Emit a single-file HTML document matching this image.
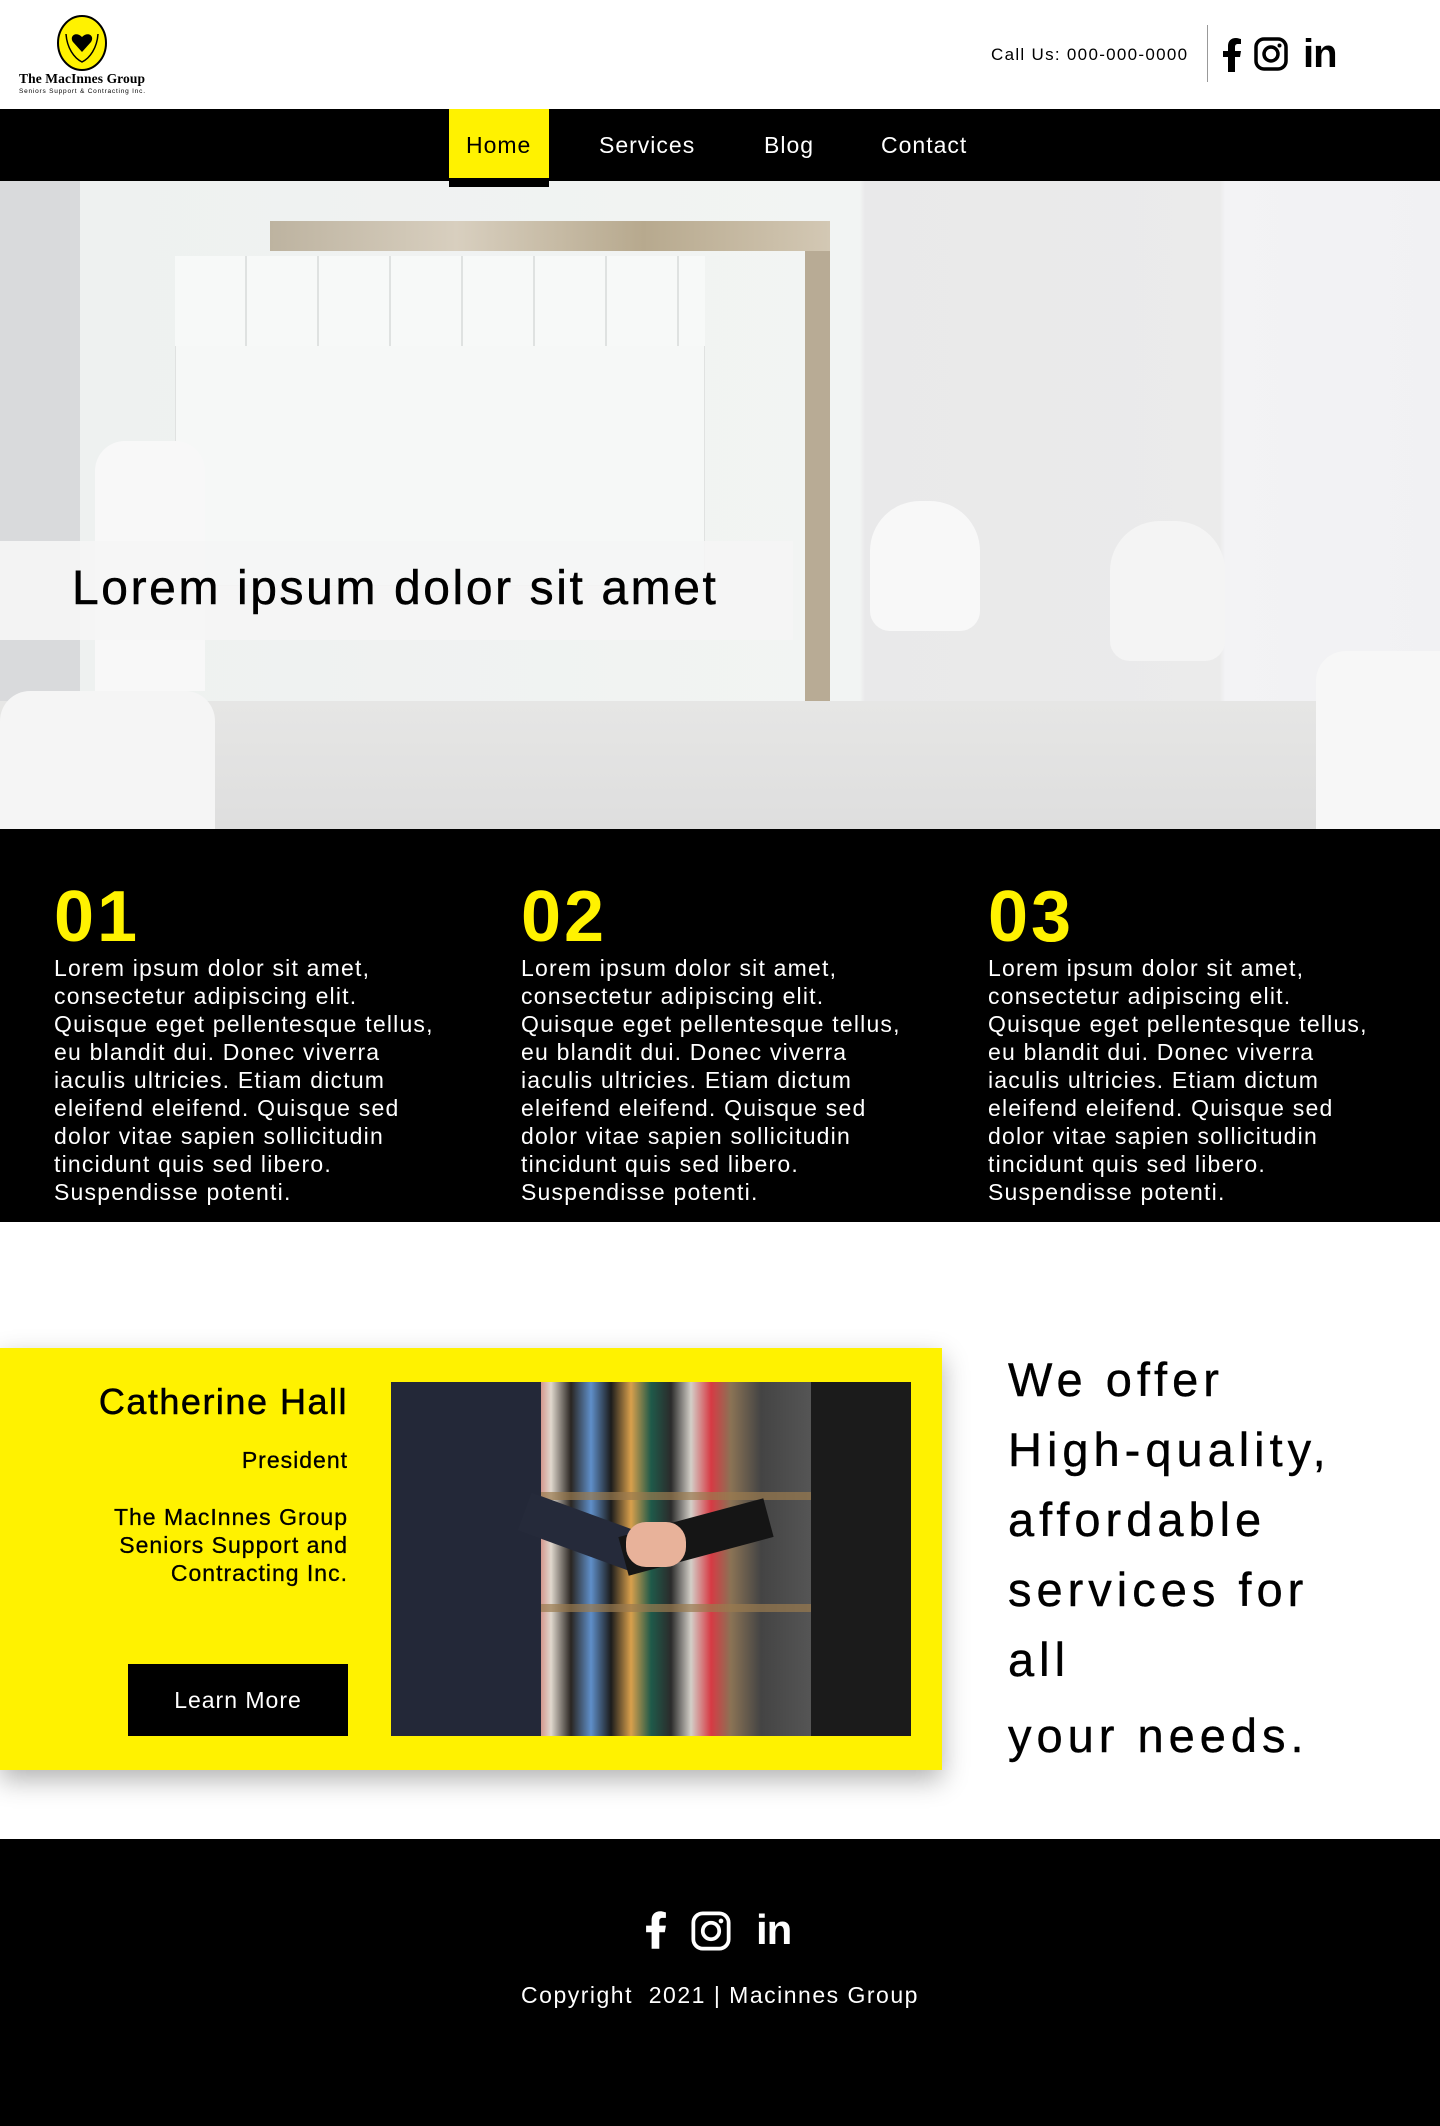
<!DOCTYPE html>
<html><head><meta charset="utf-8"><style>
*{margin:0;padding:0;box-sizing:border-box}
body{width:1440px;height:2126px;font-family:"Liberation Sans",Arial,sans-serif;background:#fff;position:relative;overflow:hidden}
.a{position:absolute}
.nav a{position:absolute;top:0;height:72px;line-height:72px;color:#fff;font-size:23px;letter-spacing:1px;text-decoration:none}
.col{position:absolute;top:877px;width:440px;color:#fff}
.col .n{color:#fff200;font-size:72px;font-weight:bold;line-height:80px;letter-spacing:3px}
.col p{font-size:23px;line-height:28px;letter-spacing:1.2px;margin-top:-3px}
.offer{position:absolute;left:1008px;font-size:47px;letter-spacing:5px;color:#000;line-height:56px;-webkit-text-stroke:.4px #000}
</style></head><body>
<!-- header -->
<div class="a" style="left:0;top:0;width:1440px;height:109px;background:#fff"></div>
<svg class="a" style="left:19px;top:14px" width="130" height="84" viewBox="0 0 130 84">
<ellipse cx="63" cy="29" rx="24" ry="27" fill="#fff200" stroke="#000" stroke-width="2"/>
<path d="M63 38 L54 28 C50 22 57 17 63 23 C69 17 76 22 72 28 Z" fill="#000"/>
<path d="M47 20 C48 34 55 44 63 48 C71 44 78 34 79 20" fill="none" stroke="#000" stroke-width="1.5"/>
<text x="0" y="69" font-family="Liberation Serif,serif" font-size="13.5" font-weight="bold" textLength="126">The MacInnes Group</text>
<text x="0" y="79" font-family="Liberation Sans,sans-serif" font-size="6.5" textLength="126">Seniors Support &amp; Contracting Inc.</text>
</svg>
<div class="a" style="left:991px;top:45px;font-size:17px;letter-spacing:1.3px;color:#000">Call Us: 000-000-0000</div>
<div class="a" style="left:1207px;top:25px;width:1px;height:57px;background:#999"></div>
<svg class="a" style="left:1222px;top:38px" width="20" height="34" viewBox="0 0 20 34"><path d="M13 34V19h5l1-6h-6V9c0-2 1-3 3-3h3V1c-1 0-3-1-5-1-5 0-8 3-8 8v5H1v6h5v15z" fill="#000"/></svg>
<svg class="a" style="left:1254px;top:37px" width="34" height="34" viewBox="0 0 34 34"><rect x="2" y="2" width="30" height="30" rx="8" fill="none" stroke="#000" stroke-width="3.5"/><circle cx="17" cy="17" r="7" fill="none" stroke="#000" stroke-width="3.5"/><circle cx="25.5" cy="8.5" r="2" fill="#000"/></svg>
<div class="a" style="left:1303px;top:32px;font-size:40px;font-weight:bold;line-height:44px;letter-spacing:-1px">in</div>
<!-- nav -->
<div class="a nav" style="left:0;top:109px;width:1440px;height:72px;background:#000">
<div class="a" style="left:449px;top:0;width:100px;height:69px;background:#fff200"></div>
<a style="left:466px;color:#000">Home</a>
<a style="left:599px">Services</a>
<a style="left:764px">Blog</a>
<a style="left:881px">Contact</a>
</div>
<div class="a" style="left:449px;top:178px;width:100px;height:9px;background:#000;z-index:3"></div>
<!-- hero -->
<div class="a" style="left:0;top:181px;width:1440px;height:648px;background:linear-gradient(90deg,#d9dadc 0,#d9dadc 80px,#eef1f0 80px,#f2f4f3 860px,#e9e9ea 865px,#ebebeb 1220px,#f3f3f5 1225px,#f1f1f3 1440px);overflow:hidden">
 <div class="a" style="left:175px;top:75px;width:530px;height:330px;background:#f6f8f7;border:1px solid #e0e2e1"></div>
 <div class="a" style="left:175px;top:75px;width:530px;height:90px;background:repeating-linear-gradient(90deg,#f7f9f8 0,#f7f9f8 70px,#dfe2e1 70px,#dfe2e1 72px)"></div>
 <div class="a" style="left:270px;top:40px;width:560px;height:30px;background:linear-gradient(90deg,#bdb3a0,#d8cfbf,#b7a98e,#d3c8b4)"></div>
 <div class="a" style="left:805px;top:70px;width:25px;height:560px;background:#b8ab95"></div>
 <div class="a" style="left:0;top:520px;width:1440px;height:130px;background:linear-gradient(#e6e6e5,#dedede)"></div>
 <div class="a" style="left:0;top:510px;width:215px;height:140px;background:#f5f5f5;border-radius:30px 30px 0 0"></div>
 <div class="a" style="left:1316px;top:470px;width:124px;height:180px;background:#f7f7f7;border-radius:30px 0 0 0"></div>
 <div class="a" style="left:870px;top:320px;width:110px;height:130px;background:#f8f8f8;border-radius:50px 50px 20px 20px"></div>
 <div class="a" style="left:1110px;top:340px;width:115px;height:140px;background:#f4f4f4;border-radius:50px 50px 20px 20px"></div>
 <div class="a" style="left:95px;top:260px;width:110px;height:250px;background:#f8f8f8;border-radius:30px 30px 0 0"></div>
 <div class="a" style="left:0;top:360px;width:793px;height:99px;background:rgba(245,245,245,.9)"></div>
 <div class="a" style="left:72px;top:380px;font-size:48px;letter-spacing:2.6px;color:#000;line-height:56px;-webkit-text-stroke:.5px #000">Lorem ipsum dolor sit amet</div>
</div>
<!-- columns -->
<div class="a" style="left:0;top:829px;width:1440px;height:393px;background:#000"></div>
<div class="col" style="left:54px"><div class="n">01</div><p>Lorem ipsum dolor sit amet,<br>consectetur adipiscing elit.<br>Quisque eget pellentesque tellus,<br>eu blandit dui. Donec viverra<br>iaculis ultricies. Etiam dictum<br>eleifend eleifend. Quisque sed<br>dolor vitae sapien sollicitudin<br>tincidunt quis sed libero.<br>Suspendisse potenti.</p></div>
<div class="col" style="left:521px"><div class="n">02</div><p>Lorem ipsum dolor sit amet,<br>consectetur adipiscing elit.<br>Quisque eget pellentesque tellus,<br>eu blandit dui. Donec viverra<br>iaculis ultricies. Etiam dictum<br>eleifend eleifend. Quisque sed<br>dolor vitae sapien sollicitudin<br>tincidunt quis sed libero.<br>Suspendisse potenti.</p></div>
<div class="col" style="left:988px"><div class="n">03</div><p>Lorem ipsum dolor sit amet,<br>consectetur adipiscing elit.<br>Quisque eget pellentesque tellus,<br>eu blandit dui. Donec viverra<br>iaculis ultricies. Etiam dictum<br>eleifend eleifend. Quisque sed<br>dolor vitae sapien sollicitudin<br>tincidunt quis sed libero.<br>Suspendisse potenti.</p></div>
<!-- card -->
<div class="a" style="left:0;top:1348px;width:942px;height:422px;background:#fff200;box-shadow:0 10px 25px rgba(0,0,0,.3)"></div>
<div class="a" style="left:40px;top:1380px;width:308px;text-align:right;font-size:36px;letter-spacing:1.5px;line-height:44px;-webkit-text-stroke:.5px #000">Catherine Hall</div>
<div class="a" style="left:40px;top:1447px;width:308px;text-align:right;font-size:23px;letter-spacing:1px;-webkit-text-stroke:.3px #000">President</div>
<div class="a" style="left:40px;top:1503px;width:308px;text-align:right;font-size:23px;letter-spacing:1px;line-height:28px;-webkit-text-stroke:.3px #000">The MacInnes Group<br>Seniors Support and<br>Contracting Inc.</div>
<div class="a" style="left:128px;top:1664px;width:220px;height:72px;background:#000;color:#fff;font-size:23px;letter-spacing:1px;text-align:center;line-height:72px">Learn More</div>
<div class="a" style="left:391px;top:1382px;width:520px;height:354px;overflow:hidden;background:linear-gradient(90deg,#1f2330 0,#2b3042 120px,#7b6a4e 125px,#c9584f 140px,#e0d8ce 160px,#2a2622 180px,#5f8fc9 200px,#1c1c1c 220px,#d9a04c 240px,#1f5a4a 260px,#2b2b2b 280px,#d3cfc8 300px,#d73a44 320px,#8a7355 340px,#444 370px,#555 420px,#1d1d1d 440px,#1a1a1a 520px)">
 <div class="a" style="left:0;top:110px;width:520px;height:8px;background:#9a7a4e;opacity:.7"></div>
 <div class="a" style="left:0;top:222px;width:520px;height:8px;background:#9a7a4e;opacity:.7"></div>
 <div class="a" style="left:0;top:0;width:150px;height:354px;background:#232838"></div>
 <div class="a" style="left:420px;top:0;width:100px;height:354px;background:#1b1b1b"></div>
 <div class="a" style="left:130px;top:130px;width:120px;height:40px;background:#252a3a;transform:rotate(20deg)"></div>
 <div class="a" style="left:230px;top:135px;width:150px;height:40px;background:#151515;transform:rotate(-15deg)"></div>
 <div class="a" style="left:235px;top:140px;width:60px;height:45px;background:#e8b29a;border-radius:20px"></div>
</div>
<div class="offer" style="top:1352px">We offer</div>
<div class="offer" style="top:1422px">High-quality,</div>
<div class="offer" style="top:1492px">affordable</div>
<div class="offer" style="top:1562px">services for</div>
<div class="offer" style="top:1632px">all</div>
<div class="offer" style="top:1708px">your needs.</div>
<!-- footer -->
<div class="a" style="left:0;top:1839px;width:1440px;height:287px;background:#000"></div>
<svg class="a" style="left:645px;top:1911px" width="22" height="38" viewBox="0 0 20 34"><path d="M13 34V19h5l1-6h-6V9c0-2 1-3 3-3h3V1c-1 0-3-1-5-1-5 0-8 3-8 8v5H1v6h5v15z" fill="#fff"/></svg>
<svg class="a" style="left:691px;top:1911px" width="40" height="40" viewBox="0 0 34 34"><rect x="2" y="2" width="30" height="30" rx="8" fill="none" stroke="#fff" stroke-width="3.2"/><circle cx="17" cy="17" r="7" fill="none" stroke="#fff" stroke-width="3.2"/><circle cx="25.5" cy="8.5" r="2" fill="#fff"/></svg>
<div class="a" style="left:756px;top:1906px;font-size:42px;font-weight:bold;color:#fff;line-height:48px;letter-spacing:-1px">in</div>
<div class="a" style="left:0;top:1982px;width:1440px;text-align:center;color:#fff;font-size:23px;letter-spacing:1.5px">Copyright&nbsp; 2021 | Macinnes Group</div>
</body></html>
